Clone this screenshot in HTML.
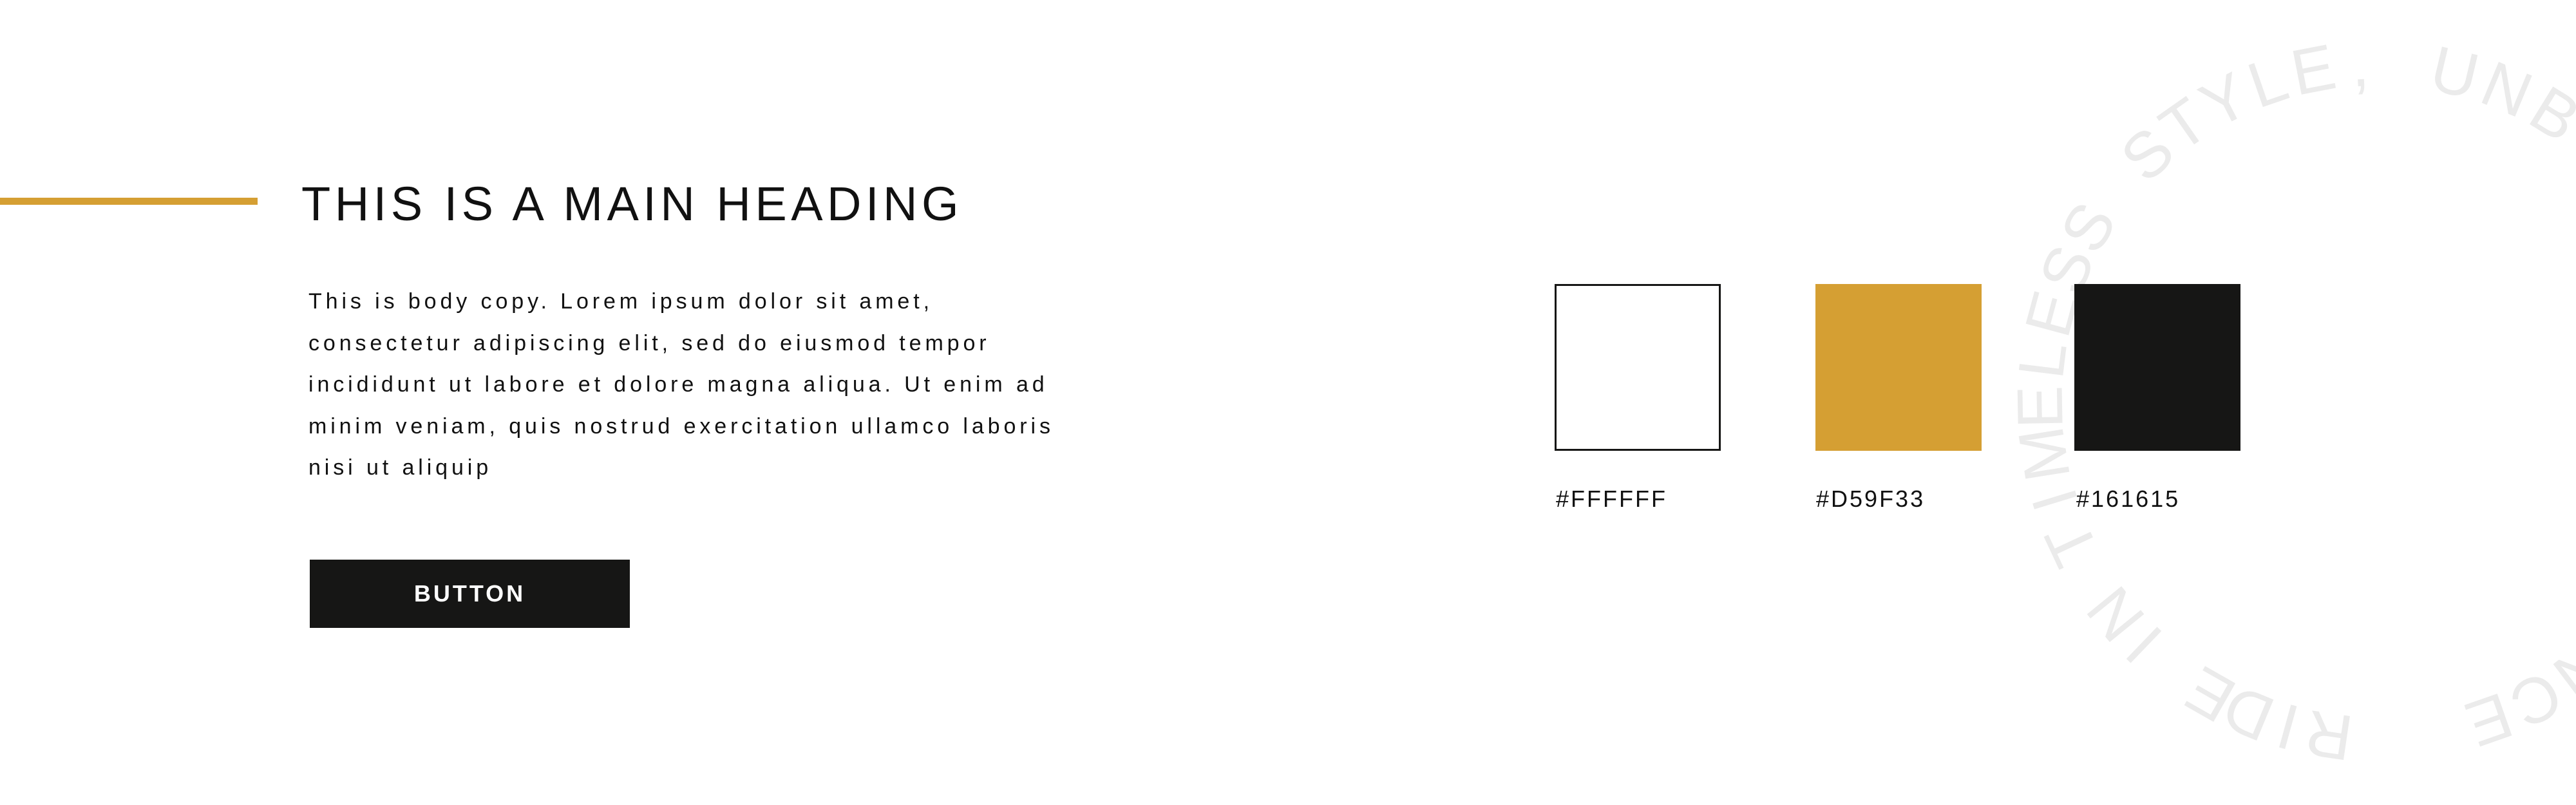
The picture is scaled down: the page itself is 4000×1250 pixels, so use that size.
<!DOCTYPE html>
<html><head><meta charset="utf-8"><style>
html,body{margin:0;padding:0;background:#fff;}
body{width:4000px;height:1250px;position:relative;overflow:hidden;font-family:"Liberation Sans",sans-serif;color:#111;}
.abs{position:absolute;}
.bar{left:0;top:307px;width:400px;height:11px;background:#d59f33;}
h1{position:absolute;left:468px;top:280px;margin:0;font-size:74px;line-height:74px;font-weight:normal;letter-spacing:6.5px;white-space:nowrap;color:#111;}
.body{left:479px;top:436px;font-size:34px;line-height:64.5px;letter-spacing:5.9px;white-space:nowrap;color:#111;}
.btn{left:481px;top:869px;width:497px;height:106px;background:#161615;color:#fff;font-weight:bold;font-size:36px;letter-spacing:4px;line-height:106px;text-align:center;}
.sw{top:441px;width:258px;height:259px;box-sizing:border-box;}
.lab{top:757px;font-size:36px;line-height:36px;letter-spacing:3px;color:#111;}
svg{position:absolute;left:0;top:0;}
</style></head><body>
<svg width="4000" height="1250" viewBox="0 0 4000 1250">
<g font-family="Liberation Sans, sans-serif" font-size="100" fill="#ebebeb" text-anchor="middle">
<text x="3692" y="133" transform="rotate(188.3 3692 623)">R</text>
<text x="3692" y="133" transform="rotate(195.4 3692 623)">I</text>
<text x="3692" y="133" transform="rotate(202.5 3692 623)">D</text>
<text x="3692" y="133" transform="rotate(209.7 3692 623)">E</text>
<text x="3692" y="133" transform="rotate(223.8 3692 623)">I</text>
<text x="3692" y="133" transform="rotate(230.9 3692 623)">N</text>
<text x="3692" y="133" transform="rotate(245 3692 623)">T</text>
<text x="3692" y="133" transform="rotate(253 3692 623)">I</text>
<text x="3692" y="133" transform="rotate(261 3692 623)">M</text>
<text x="3692" y="133" transform="rotate(269 3692 623)">E</text>
<text x="3692" y="133" transform="rotate(277 3692 623)">L</text>
<text x="3692" y="133" transform="rotate(285 3692 623)">E</text>
<text x="3692" y="133" transform="rotate(293 3692 623)">S</text>
<text x="3692" y="133" transform="rotate(301 3692 623)">S</text>
<text x="3692" y="133" transform="rotate(317 3692 623)">S</text>
<text x="3692" y="133" transform="rotate(325 3692 623)">T</text>
<text x="3692" y="133" transform="rotate(333 3692 623)">Y</text>
<text x="3692" y="133" transform="rotate(341 3692 623)">L</text>
<text x="3692" y="133" transform="rotate(349 3692 623)">E</text>
<text x="3692" y="133" transform="rotate(357 3692 623)">,</text>
<text x="3692" y="133" transform="rotate(373.2 3692 623)">U</text>
<text x="3692" y="133" transform="rotate(382.5 3692 623)">N</text>
<text x="3692" y="133" transform="rotate(391.7 3692 623)">B</text>
<text x="3692" y="133" transform="rotate(403 3692 623)">E</text>
<text x="3692" y="133" transform="rotate(409.3 3692 623)">A</text>
<text x="3692" y="133" transform="rotate(415.5 3692 623)">T</text>
<text x="3692" y="133" transform="rotate(421.8 3692 623)">A</text>
<text x="3692" y="133" transform="rotate(428.1 3692 623)">B</text>
<text x="3692" y="133" transform="rotate(434.4 3692 623)">L</text>
<text x="3692" y="133" transform="rotate(440.6 3692 623)">E</text>
<text x="3692" y="133" transform="rotate(453.2 3692 623)">P</text>
<text x="3692" y="133" transform="rotate(459.5 3692 623)">E</text>
<text x="3692" y="133" transform="rotate(465.7 3692 623)">R</text>
<text x="3692" y="133" transform="rotate(472 3692 623)">F</text>
<text x="3692" y="133" transform="rotate(478.3 3692 623)">O</text>
<text x="3692" y="133" transform="rotate(484.6 3692 623)">R</text>
<text x="3692" y="133" transform="rotate(490.8 3692 623)">M</text>
<text x="3692" y="133" transform="rotate(497 3692 623)">A</text>
<text x="3692" y="133" transform="rotate(503 3692 623)">N</text>
<text x="3692" y="133" transform="rotate(512 3692 623)">C</text>
<text x="3692" y="133" transform="rotate(520.7 3692 623)">E</text>
</g>
</svg>
<div class="abs bar"></div>
<h1>THIS IS A MAIN HEADING</h1>
<div class="abs body">This is body copy. Lorem ipsum dolor sit amet,<br>consectetur adipiscing elit, sed do eiusmod tempor<br>incididunt ut labore et dolore magna aliqua. Ut enim ad<br>minim veniam, quis nostrud exercitation ullamco laboris<br>nisi ut aliquip</div>
<div class="abs btn">BUTTON</div>
<div class="abs sw" style="left:2414px;border:3px solid #161615;background:#fff;"></div>
<div class="abs sw" style="left:2819px;background:#d59f33;"></div>
<div class="abs sw" style="left:3221px;background:#161615;"></div>
<div class="abs lab" style="left:2416px;">#FFFFFF</div>
<div class="abs lab" style="left:2820px;">#D59F33</div>
<div class="abs lab" style="left:3224px;">#161615</div>
</body></html>
